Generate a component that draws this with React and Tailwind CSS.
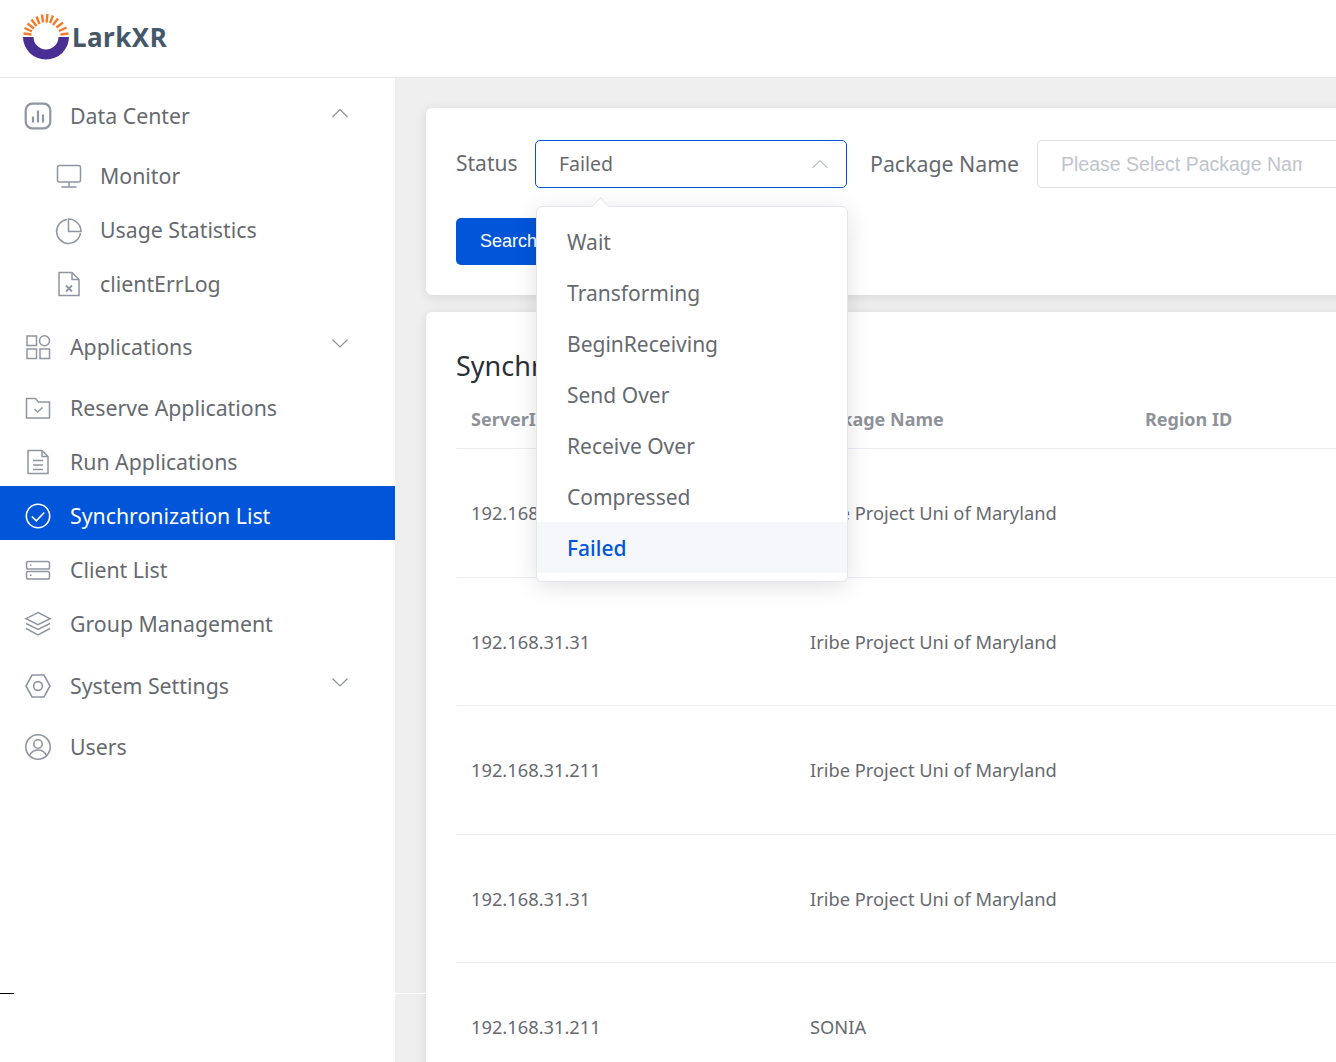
const S = ({ children, c = "#8f95a1", sw = 1.5 }) => (
  <svg width="30" height="30" viewBox="0 0 30 30" fill="none" stroke={c} strokeWidth={sw} className="shrink-0">{children}</svg>
);
const icons = {
  data: <S><rect x="2.7" y="2.7" width="24.6" height="24.6" rx="6.5" strokeWidth="2.2" /><path d="M10 15.500v6M15 9.500v12M20 13.500v8" strokeWidth="2.2" /></S>,
  monitor: <S><rect x="3.500" y="4.500" width="23" height="16.500" rx="2" /><path d="M15 21v5M7.500 26h15" /></S>,
  pie: <S><path d="M13 4.500a12 12 0 1 0 13.500 13.500" /><path d="M14.500 4a12.500 12.500 0 0 1 12.500 12.500H14.500z" /></S>,
  file: <S><path d="M5 3.500h13l7 7v16H5z" /><path d="M18 3.500v7h7" /><path d="M12 16.500l6 6M18 16.500l-6 6" strokeWidth="1.800" /></S>,
  apps: <S><rect x="4" y="4" width="9.500" height="9.500" /><circle cx="21.500" cy="8.800" r="5" /><rect x="4" y="17" width="9.500" height="9.500" /><rect x="17" y="17" width="9.500" height="9.500" /></S>,
  folder: <S><path d="M3.500 5.500h9l3 3.500h11v16h-23z" /><path d="M11.500 16l3 3 5-4.500" /></S>,
  doc: <S><path d="M5 3.500h14l6 6v17H5z" /><path d="M19 3.500v6h6M10 13.500h10M10 18h10M10 22.500h10" /></S>,
  check: <S c="#ffffff" sw="1.600"><circle cx="15" cy="15" r="11.700" /><path d="M8.800 15.500l4.500 4.300 8-8.300" /></S>,
  client: <S><rect x="3.500" y="6.500" width="23" height="7.500" rx="1.800" /><rect x="3.500" y="16.500" width="23" height="7.500" rx="1.800" /><path d="M7 10.200h1.500M7 20.200h1.500" /></S>,
  layers: <S><path d="M15 3.500l12 6.200-12 6-12-6z" /><path d="M3 14.500l12 6 12-6M3 19.500l12 6.500 12-6.500" /></S>,
  hex: <S sw="1.600"><path d="M9 4h12l6 11-6 11H9L3 15z" /><circle cx="15" cy="15" r="4.400" /></S>,
  user: <S sw="1.600"><circle cx="15" cy="15" r="12.200" /><circle cx="15" cy="12" r="4.200" /><path d="M6.500 23.500c2-4 5-5.500 8.500-5.500s6.500 1.500 8.500 5.500" /></S>,
};
const Chevron = ({ up, c = "#8b9099" }) => (
  <svg width="18" height="10" viewBox="0 0 18 10" fill="none" stroke={c} strokeWidth="1.200" className="shrink-0">
    <path d={up ? "M1.500 9L9 1.500 16.500 9" : "M1.500 1.500L9 9l7.500-7.500"} />
  </svg>
);

const Head = ({ icon, label, chev, cls }) => (
  <div className={`flex h-[60px] items-center pl-[23px] pt-[6px] ${cls}`}>
    {icons[icon]}
    <span className="ml-[17px] text-[21.3px] text-[#666a70]">{label}</span>
    {chev && <span className={`absolute left-[331px] ${chev === "up" ? "mt-[-6px]" : "mt-[-8px]"}`}><Chevron up={chev === "up"} /></span>}
  </div>
);
const Item = ({ icon, label, active }) => (
  <div className={`flex h-[54px] items-center pl-[23px] pt-[6px] ${active ? "bg-[#0055d9]" : ""}`}>
    {icons[icon]}
    <span className={`ml-[17px] text-[21.3px] ${active ? "text-white" : "text-[#666a70]"}`}>{label}</span>
  </div>
);
const Sub = ({ icon, label }) => (
  <div className="flex h-[54px] items-center pl-[54px] pt-[6px]">
    {icons[icon]}
    <span className="ml-[16px] text-[21.3px] text-[#666a70]">{label}</span>
  </div>
);

const rows = [
  ["192.168.31.211", "Iribe Project Uni of Maryland"],
  ["192.168.31.31", "Iribe Project Uni of Maryland"],
  ["192.168.31.211", "Iribe Project Uni of Maryland"],
  ["192.168.31.31", "Iribe Project Uni of Maryland"],
  ["192.168.31.211", "SONIA"],
];
const options = ["Wait", "Transforming", "BeginReceiving", "Send Over", "Receive Over", "Compressed"];

export default function App() {
  return (
    <div className="relative flex h-[1062px] w-[1336px] flex-col overflow-hidden bg-white font-['Noto_Sans',sans-serif]">
      <header className="flex h-[78px] shrink-0 items-center border-b border-[#e6e6e6] bg-white pl-[21px]">
        <svg width="50" height="50" viewBox="0 0 50 50" fill="none" className="mb-[3px] shrink-0">
          <g stroke="#f47b2a" strokeWidth="2.400">
            <path d="M2.500 21.500l8 1M3.500 16l7.500 3.500M6.500 11.500l6.500 5M10.500 7.500l5 6.500M15.500 4.500l3 7.500M21 2.500l1 8M26.500 2l-1 8.500M32 3.500l-3 7.500M37 6.500l-5 6.500M42 10.500l-6.500 5M45.500 15.500l-7.500 3.500M47.500 21.500l-8 1" />
          </g>
          <path d="M2 25h10.500a12.500 12.500 0 0 0 25 0H48A23 22.500 0 0 1 2 25z" fill="#4b2e93" />
        </svg>
        <span className="ml-[1px] mb-[3px] text-[26px] font-bold leading-none tracking-[0.5px] text-[#45586a]">LarkXR</span>
      </header>

      <div className="flex min-h-0 flex-1">
        <aside className="relative w-[395px] shrink-0 bg-white pt-[5px]">
          <Head icon="data" label="Data Center" chev="up" />
          <div className="mt-[3px]">
            <Sub icon="monitor" label="Monitor" />
            <Sub icon="pie" label="Usage Statistics" />
            <Sub icon="file" label="clientErrLog" />
          </div>
          <Head icon="apps" label="Applications" chev="down" cls="mt-[6px]" />
          <div className="mt-[4px]">
            <Item icon="folder" label="Reserve Applications" />
            <Item icon="doc" label="Run Applications" />
            <Item icon="check" label="Synchronization List" active />
            <Item icon="client" label="Client List" />
            <Item icon="layers" label="Group Management" />
          </div>
          <Head icon="hex" label="System Settings" chev="down" cls="mt-[5px]" />
          <Head icon="user" label="Users" cls="mt-[1px]" />
        </aside>

        <main className="relative min-w-0 flex-1 overflow-hidden bg-[#efeff0] pl-[31px] pt-[30px]">
          <section className="w-[1000px] rounded-[6px] bg-white pb-[30px] pl-[30px] pt-[32px] shadow-[0_2px_12px_rgba(0,0,0,0.1)]">
            <div className="flex h-[48px] items-center">
              <span className="w-[79px] text-[21px] text-[#666a70]">Status</span>
              <div className="flex h-[48px] w-[312px] items-center justify-between rounded-[5px] border border-[#0055d9] pl-[23px] pr-[17px] text-[19.5px] text-[#666a70]">
                <span>Failed</span>
                <Chevron up c="#c0c4cc" />
              </div>
              <span className="ml-[23px] w-[167px] text-[21.3px] text-[#666a70]">Package Name</span>
              <div className="flex h-[48px] w-[312px] items-center rounded-[5px] border border-[#dcdfe6] pl-[23px]">
                <span className="mt-[1px] w-[241px] overflow-hidden whitespace-nowrap font-['Liberation_Sans',sans-serif] text-[19.5px] text-[#c0c4cc]">Please Select Package Name</span>
              </div>
            </div>
            <button className="mt-[30px] flex h-[47px] w-[120px] items-center rounded-[5px] bg-[#0055d9] pl-[24px] font-['Liberation_Sans',sans-serif] text-[18px] text-white">Search</button>
          </section>

          <section className="mt-[17px] h-[800px] w-[1000px] rounded-[6px] bg-white pl-[30px] pt-[31px] shadow-[0_2px_12px_rgba(0,0,0,0.1)]">
            <h2 className="text-[27px] leading-[46px] text-[#2b2f36]">Synchronization List</h2>
            <div className="mt-[3px] grid h-[57px] grid-cols-[339px_335px_1fr] items-center border-b border-[#ebeef5] pb-[2px] text-[18px] font-bold text-[#8f9299]">
              <span className="pl-[15px]">ServerIP</span>
              <span className="pl-[15px]">Package Name</span>
              <span className="pl-[15px]">Region ID</span>
            </div>
            {rows.map((r, i) => (
              <div key={i} className="grid h-[128.5px] grid-cols-[339px_335px_1fr] items-center border-b border-[#ebeef5] text-[18.3px] text-[#666a70]">
                <span className="pl-[15px]">{r[0]}</span>
                <span className="pl-[15px]">{r[1]}</span>
                <span />
              </div>
            ))}
          </section>

          <div className="absolute left-[141px] top-[128px] z-10 w-[312px] rounded-[6px] border border-[#e4e7ed] bg-white pb-[8px] pt-[9px] shadow-[0_4px_24px_rgba(0,0,0,0.12)]">
            <div className="absolute left-[57px] top-[-7px] h-[13px] w-[13px] rotate-45 border-l border-t border-[#e4e7ed] bg-white" />
            {options.map((o) => (
              <div key={o} className="relative flex h-[51px] items-center pl-[30px] pt-[2px] text-[21px] text-[#666a70]">{o}</div>
            ))}
            <div className="relative flex h-[51px] items-center bg-[#f5f7fa] pl-[30px] pt-[2px] text-[21px] font-medium text-[#0055d9]">Failed</div>
          </div>
        </main>
      </div>

      <div className="absolute left-0 top-[993px] h-px w-[14px] bg-black" />
      <div className="absolute left-[395px] top-[993px] h-px w-[31px] bg-white" />
    </div>
  );
}
